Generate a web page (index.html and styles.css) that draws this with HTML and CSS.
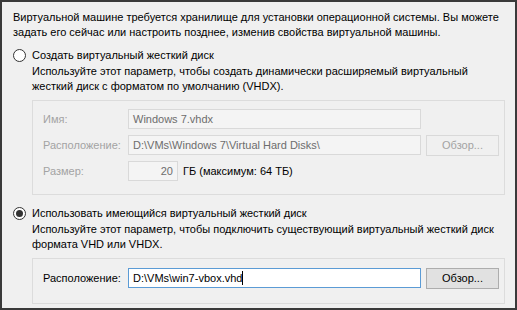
FILE: index.html
```html
<!DOCTYPE html>
<html lang="ru">
<head>
<meta charset="utf-8">
<link rel="stylesheet" href="styles.css">
</head>
<body>
<div class="frame">
  <p class="intro">Виртуальной машине требуется хранилище для установки операционной системы. Вы можете<br>задать его сейчас или настроить позднее, изменив свойства виртуальной машины.</p>

  <div class="option">
    <div class="radio-row"><span class="radio"></span><span>Создать виртуальный жесткий диск</span></div>
    <p class="desc">Используйте этот параметр, чтобы создать динамически расширяемый виртуальный<br>жесткий диск с форматом по умолчанию (VHDX).</p>
    <div class="group group-1">
      <div class="row">
        <span class="label disabled">Имя:</span>
        <span class="input input-wide disabled-input">Windows 7.vhdx</span>
      </div>
      <div class="row">
        <span class="label disabled">Расположение:</span>
        <span class="input input-wide disabled-input">D:\VMs\Windows 7\Virtual Hard Disks\</span>
        <span class="button disabled-button">Обзор...</span>
      </div>
      <div class="row">
        <span class="label disabled">Размер:</span>
        <span class="input input-small disabled-input">20</span>
        <span class="unit">ГБ (максимум: 64 ТБ)</span>
      </div>
    </div>
  </div>

  <div class="option option-2">
    <div class="radio-row"><span class="radio checked"></span><span>Использовать имеющийся виртуальный жесткий диск</span></div>
    <p class="desc">Используйте этот параметр, чтобы подключить существующий виртуальный жесткий диск<br>формата VHD или VHDX.</p>
    <div class="group group-2">
      <div class="row">
        <span class="label">Расположение:</span>
        <span class="input input-wide focused">D:\VMs\win7-vbox.vhd<span class="caret"></span></span>
        <span class="button">Обзор...</span>
      </div>
    </div>
  </div>
</div>
</body>
</html>
```

FILE: styles.css
```css
html, body {
  margin: 0;
  padding: 0;
}
body {
  width: 517px;
  height: 310px;
  background: #f0f0f0;
  font-family: "Liberation Sans", Arial, sans-serif;
  font-size: 11px;
  color: #000;
  overflow: hidden;
}
.frame {
  box-sizing: border-box;
  width: 517px;
  height: 310px;
  border: 2px solid #3a3a3a;
  background: #f0f0f0;
  padding: 8px 0 0 11px;
}
p {
  margin: 0;
}
.intro {
  line-height: 15px;
  white-space: nowrap;
}
.option {
  margin-top: 8px;
}
.option-2 {
  margin-top: 11px;
}
.radio-row {
  display: flex;
  align-items: center;
  gap: 6px;
  height: 15px;
  line-height: 15px;
}
.radio {
  box-sizing: border-box;
  width: 13px;
  height: 13px;
  border: 1px solid #333;
  border-radius: 50%;
  background: #fff;
  display: flex;
  align-items: center;
  justify-content: center;
}
.radio.checked::after {
  content: "";
  width: 7px;
  height: 7px;
  border-radius: 50%;
  background: #333;
}
.desc {
  margin: 1px 0 0 19px;
  line-height: 15px;
  white-space: nowrap;
}
.group {
  margin: 6px 0 0 19px;
  width: 473px;
  box-sizing: border-box;
  border: 1px solid #dcdcdc;
  padding: 8px 0 0 10px;
  display: flex;
  flex-direction: column;
  gap: 6px;
}
.group-1 {
  height: 95px;
}
.group-2 {
  height: 46px;
  padding-top: 9px;
}
.row {
  display: flex;
  align-items: flex-start;
  height: 20px;
}
.label {
  width: 85px;
  line-height: 20px;
  white-space: nowrap;
}
.label.disabled {
  color: #a3a3a3;
}
.input {
  box-sizing: border-box;
  height: 20px;
  border: 1px solid #d9d9d9;
  background: #fff;
  padding: 0 4px;
  line-height: 18px;
  white-space: nowrap;
  overflow: hidden;
}
.input-wide {
  width: 293px;
}
.input-small {
  width: 50px;
  text-align: right;
}
.disabled-input {
  background: #f4f4f4;
  color: #6d6d6d;
}
.focused {
  border-color: #5b9bd5;
  background: #fff;
  color: #000;
}
.caret {
  display: inline-block;
  width: 1px;
  height: 14px;
  background: #000;
  vertical-align: -3px;
}
.unit {
  margin-left: 5px;
  line-height: 20px;
}
.button {
  box-sizing: border-box;
  margin-left: 5px;
  width: 73px;
  height: 21px;
  border: 1px solid #adadad;
  background: #e1e1e1;
  text-align: center;
  line-height: 19px;
}
.disabled-button {
  border-color: #d9d9d9;
  background: #f0f0f0;
  color: #a3a3a3;
}
```
